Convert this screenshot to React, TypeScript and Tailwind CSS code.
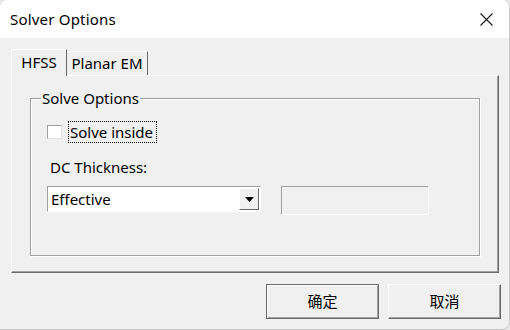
import React, { useState } from "react";

const font = { fontFamily: '"Noto Sans", "Noto Sans CJK SC", sans-serif' };

const App = () => {
  const [solveInside, setSolveInside] = useState(false);
  const [tab, setTab] = useState("HFSS");

  return (
    <div
      className="h-[330px] w-[510px] overflow-hidden bg-[#e8e8e8] text-[15px] leading-none text-black"
      style={font}
    >
      <div className="flex h-[330px] w-[510px] flex-col overflow-hidden rounded-t-lg rounded-br-lg border-r border-b border-[#c8c8c8] bg-[#f0f0f0]">
        {/* title bar */}
        <div className="flex h-[38px] shrink-0 items-center justify-between bg-white pl-[10px]">
          <span className="text-[15px] tracking-[0.2px]">Solver Options</span>
          <button className="flex h-[38px] w-[46px] items-center justify-center">
            <svg width="13" height="13" viewBox="0 0 13 13">
              <path d="M0.5 0.5 L12.5 12.5 M12.5 0.5 L0.5 12.5" stroke="#1a1a1a" strokeWidth="1.1" />
            </svg>
          </button>
        </div>

        {/* tabs */}
        <div className="flex items-end pt-[11px] pl-[11px]">
          <button
            onClick={() => setTab("HFSS")}
            className="relative z-10 -mb-px flex h-[27px] w-[56px] items-start justify-center border-t border-l border-r border-t-white border-l-white border-r-[#696969] bg-[#f0f0f0] pt-[5px]"
          >
            HFSS
          </button>
          <button
            onClick={() => setTab("Planar EM")}
            className="flex h-[24px] w-[81px] items-start justify-center border-t border-r border-t-white border-r-[#696969] bg-[#f0f0f0] pt-[4px]"
          >
            Planar EM
          </button>
        </div>

        {/* tab panel */}
        <div className="ml-[11px] h-[198px] w-[488px] border border-t-white border-l-white border-r-[#696969] border-b-[#696969]">
          <div className="h-full w-full border-r border-b border-[#a0a0a0] pt-[15px] pl-[18px]">
            {tab === "HFSS" && (
              <fieldset className="h-[165px] w-[450px] border border-[#a0a0a0] shadow-[inset_1px_1px_0_#ffffff,1px_1px_0_#ffffff] pl-[16px]">
                <legend className="-ml-[6px] px-px text-[15px]">Solve Options</legend>
                <label className="mt-[15px] flex items-center">
                  <span
                    onClick={() => setSolveInside(!solveInside)}
                    className="flex h-[14px] w-[15px] items-center justify-center border border-t-[#a0a0a0] border-l-[#a0a0a0] border-r-[#e3e3e3] border-b-[#e3e3e3] bg-white text-[11px]"
                  >
                    {solveInside ? "✓" : ""}
                  </span>
                  <span
                    onClick={() => setSolveInside(!solveInside)}
                    className="ml-[6px] flex h-[22px] w-[89px] items-center border border-dotted border-black pl-px"
                  >
                    Solve inside
                  </span>
                </label>
                <div className="mt-[17px] ml-[3px]">DC Thickness:</div>
                <div className="mt-[11px] flex items-start">
                  <div className="flex h-[26px] w-[214px] items-center justify-between border border-t-[#a0a0a0] border-l-[#a0a0a0] border-r-[#ffffff] border-b-[#ffffff] bg-white">
                    <span className="pl-[3px]">Effective</span>
                    <span className="mr-px flex h-[22px] w-[20px] items-center justify-center border border-t-white border-l-white border-r-[#696969] border-b-[#696969] bg-[#f0f0f0]">
                      <svg width="9" height="5" viewBox="0 0 9 5">
                        <path d="M0 0 L9 0 L4.5 5 Z" fill="#000" />
                      </svg>
                    </span>
                  </div>
                  <div className="ml-[20px] h-[29px] w-[148px] border border-t-[#a0a0a0] border-l-[#a0a0a0] border-r-white border-b-white bg-[#f0f0f0]" />
                </div>
              </fieldset>
            )}
          </div>
        </div>

        {/* buttons */}
        <div className="mt-[11px] flex justify-end gap-[9px] pr-[8px]">
          <button className="h-[35px] w-[113px] border border-[#696969] bg-[#f0f0f0] shadow-[inset_1px_1px_0_#ffffff,inset_-1px_-1px_0_#a0a0a0]">
            确定
          </button>
          <button className="h-[35px] w-[113px] border border-t-white border-l-white border-r-[#696969] border-b-[#696969] bg-[#f0f0f0] shadow-[inset_-1px_-1px_0_#a0a0a0]">
            取消
          </button>
        </div>
      </div>
    </div>
  );
};

export default App;
